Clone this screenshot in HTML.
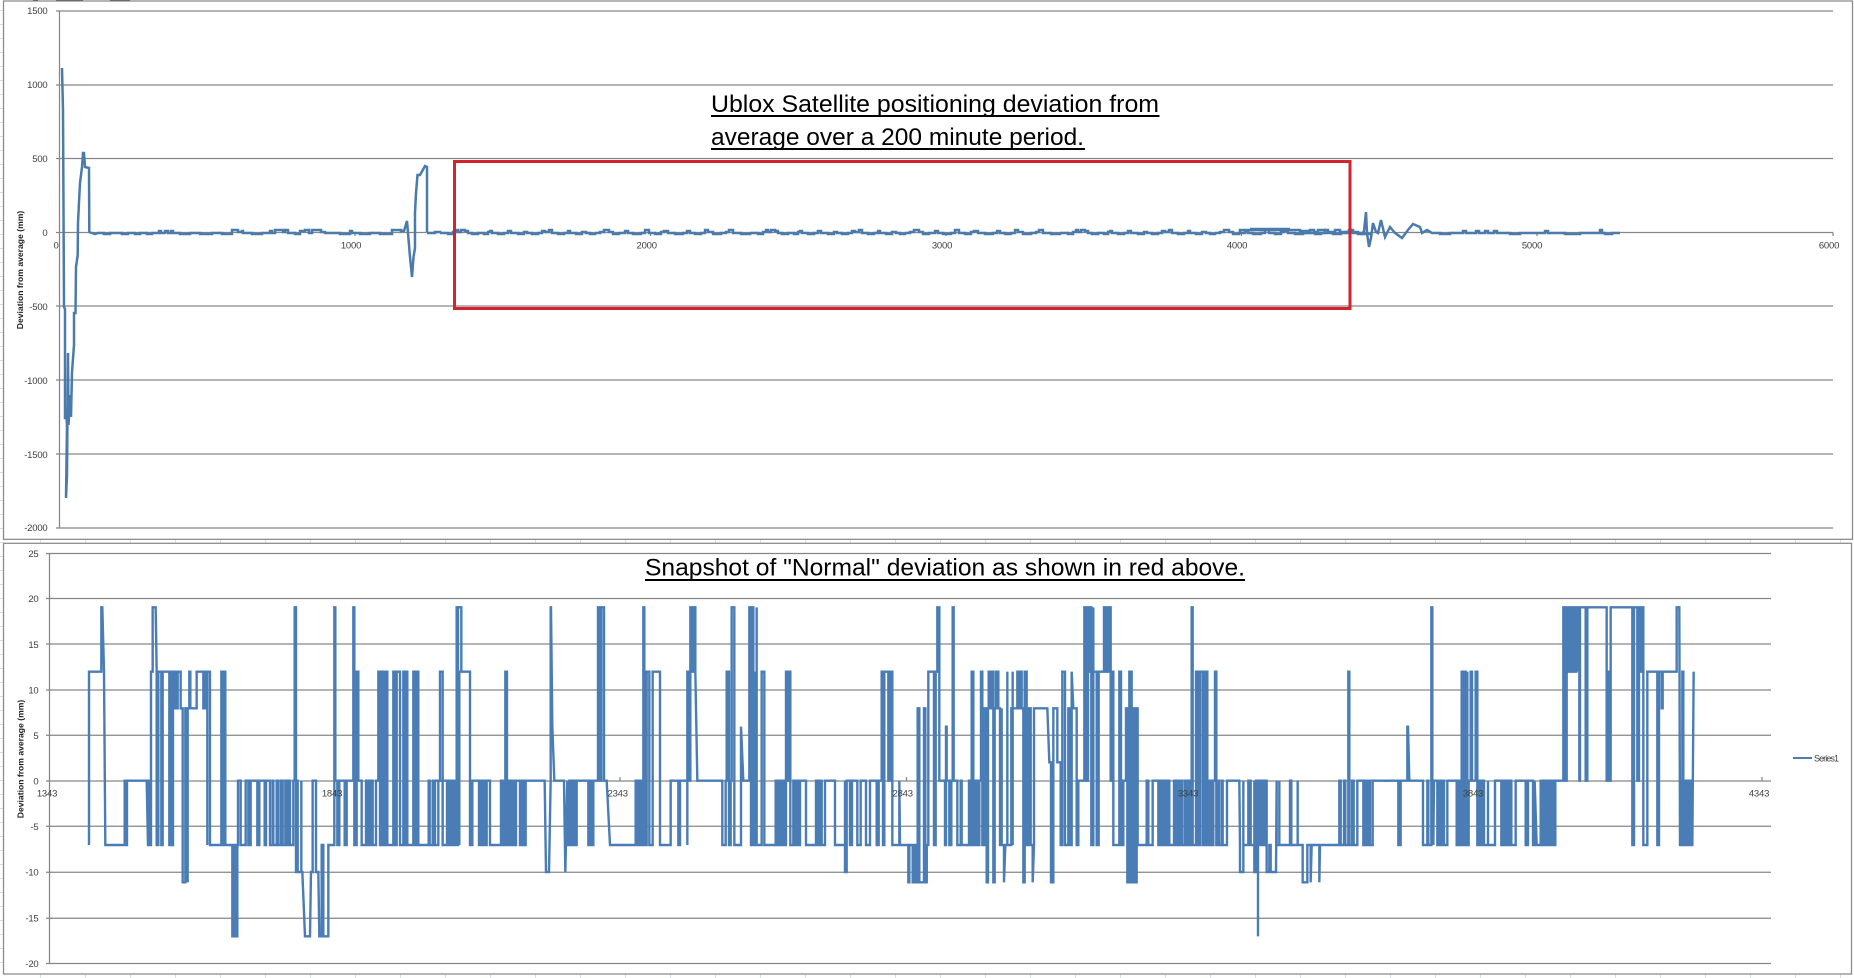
<!DOCTYPE html>
<html><head><meta charset="utf-8"><title>Ublox deviation charts</title>
<style>
html,body{margin:0;padding:0;background:#fff;width:1854px;height:978px;overflow:hidden}
svg{display:block;position:absolute;left:0;top:0}
.t{font:9.5px "Liberation Sans",sans-serif;fill:#404040;letter-spacing:-.2px}
.e{text-anchor:end}.m{text-anchor:middle}
.y{font:bold 8.6px "Liberation Sans",sans-serif;fill:#222;text-anchor:middle}
.h{font:24px "Liberation Sans",sans-serif;fill:#000}
.g{stroke:#868686;stroke-width:1.25;fill:none}
.s{fill:none;stroke:#4a7db5;stroke-linejoin:miter}
.n{fill:none;stroke:#4a7bab;stroke-width:2.5}
</style></head><body>
<svg width="1854" height="978" viewBox="0 0 1854 978" xmlns="http://www.w3.org/2000/svg">
<defs>
<path id="na" d="M0,233H8V234H13V232H16V230H18V232H21V230H25V231H28V233H32V234H38V233H44V234H48V232H50V231H52V233H58V234H64V233H68V231H71V233H78V234H84V232H87V233H92V234H98V233H102V231H105V232H109V230H112V233H118V234H124V233H128V231H130V233H136V234H142V232H146V233H150V234H155V233"/>
<path id="nb" d="M0,233H5V232H9V230H14V232H18V234H24V233H30V231H33V233H38V234H46V233H50V230H54V233H60V234H66V232H69V231H73V233H80V234H88V233H92V231H95V233H100V234H106V233H110V230H113V232H118V234H126V233H131V232H134V230H138V233H146V234H155V233"/>
</defs>
<rect width="1854" height="978" fill="#fff"/>
<!-- sheet cell lines -->
<g stroke="#d8deea" stroke-width="1" fill="none">
<path d="M0 10.5H3M0 24.5H3M0 38.5H3M0 52.5H3M0 66.5H3M0 80.5H3M0 94.5H3M0 108.5H3M0 122.5H3M0 136.5H3M0 150.5H3M0 164.5H3M0 178.5H3M0 192.5H3M0 206.5H3M0 220.5H3M0 234.5H3M0 248.5H3M0 262.5H3M0 276.5H3M0 290.5H3M0 304.5H3M0 318.5H3M0 332.5H3M0 346.5H3M0 360.5H3M0 374.5H3M0 388.5H3M0 402.5H3M0 416.5H3M0 430.5H3M0 444.5H3M0 458.5H3M0 472.5H3M0 486.5H3M0 500.5H3M0 514.5H3M0 528.5H3M0 542.5H3M0 556.5H3M0 570.5H3M0 584.5H3M0 598.5H3M0 612.5H3M0 626.5H3M0 640.5H3M0 654.5H3M0 668.5H3M0 682.5H3M0 696.5H3M0 710.5H3M0 724.5H3M0 738.5H3M0 752.5H3M0 766.5H3M0 780.5H3M0 794.5H3M0 808.5H3M0 822.5H3M0 836.5H3M0 850.5H3M0 864.5H3M0 878.5H3M0 892.5H3M0 906.5H3M0 920.5H3M0 934.5H3M0 948.5H3M0 962.5H3"/>
<path d="M40.5 539V543M85.5 539V543M130.5 539V543M175.5 539V543M220.5 539V543M265.5 539V543M310.5 539V543M355.5 539V543M400.5 539V543M445.5 539V543M490.5 539V543M535.5 539V543M580.5 539V543M625.5 539V543M670.5 539V543M715.5 539V543M760.5 539V543M805.5 539V543M850.5 539V543M895.5 539V543M940.5 539V543M985.5 539V543M1030.5 539V543M1075.5 539V543M1120.5 539V543M1165.5 539V543M1210.5 539V543M1255.5 539V543M1300.5 539V543M1345.5 539V543M1390.5 539V543M1435.5 539V543M1480.5 539V543M1525.5 539V543M1570.5 539V543M1615.5 539V543M1660.5 539V543M1705.5 539V543M1750.5 539V543M1795.5 539V543M1840.5 539V543"/>
<path d="M40.5 974V978M85.5 974V978M130.5 974V978M175.5 974V978M220.5 974V978M265.5 974V978M310.5 974V978M355.5 974V978M400.5 974V978M445.5 974V978M490.5 974V978M535.5 974V978M580.5 974V978M625.5 974V978M670.5 974V978M715.5 974V978M760.5 974V978M805.5 974V978M850.5 974V978M895.5 974V978M940.5 974V978M985.5 974V978M1030.5 974V978M1075.5 974V978M1120.5 974V978M1165.5 974V978M1210.5 974V978M1255.5 974V978M1300.5 974V978M1345.5 974V978M1390.5 974V978M1435.5 974V978M1480.5 974V978M1525.5 974V978M1570.5 974V978M1615.5 974V978M1660.5 974V978M1705.5 974V978M1750.5 974V978M1795.5 974V978M1840.5 974V978"/>
</g>
<rect x="33" y="0" width="5" height="1" fill="#333"/><rect x="56" y="0" width="27" height="1" fill="#333"/><rect x="110" y="0" width="20" height="1" fill="#333"/>

<!-- frames -->
<rect x="3.5" y="1" width="1849" height="538.3" fill="#fff" stroke="#8a8a8a" stroke-width="1.25"/>
<rect x="3.5" y="543.3" width="1848" height="430.7" fill="#fff" stroke="#8a8a8a" stroke-width="1.25"/>

<!-- top chart grid -->
<path class="g" d="M56 11H1833M56 85H1833M56 158.5H1833M56 232.5H1833M56 306H1833M56 380H1833M56 454H1833M56 528H1833M59.5 11V528"/>
<path class="g" d="M355 232.5V236M650.5 232.5V236M946 232.5V236M1241.5 232.5V236M1537 232.5V236M1833 232.5V236" stroke-width="1"/>
<text class="t e" x="47.5" y="14">1500</text><text class="t e" x="47.5" y="88">1000</text><text class="t e" x="47.5" y="162">500</text><text class="t e" x="47.5" y="236">0</text><text class="t e" x="47.5" y="310">-500</text><text class="t e" x="47.5" y="384">-1000</text><text class="t e" x="47.5" y="458">-1500</text><text class="t e" x="47.5" y="531">-2000</text>
<text class="t m" x="56" y="248.5">0</text><text class="t m" x="351" y="248.5">1000</text><text class="t m" x="646.7" y="248.5">2000</text><text class="t m" x="942" y="248.5">3000</text><text class="t m" x="1237" y="248.5">4000</text><text class="t m" x="1532" y="248.5">5000</text><text class="t m" x="1829" y="248.5">6000</text>
<text class="y" transform="translate(23,270) rotate(-90)">Deviation from average  (mm)</text>

<!-- top series -->
<path class="n" d="M62,68L63,110L64,307L65,309L65,418L66.5,418L67,425L66,498L67,475L68,353L68.5,425L70,395L71,417L72,372L74,345L74,313L75.5,313L76,267L77.7,255L78,223L79,202L80,183L82,167L83,153L84,153L85,167L89,168L89.3,232L92,233L95,234L98,233H104V234H110V233H122V234H128V233H135V234H140V233H147V234H152V233H159V231H161V233H165V234V231H168V233H171V231H173V233H180V234H190V233H200V234H212V233H222V234H232V233V230H238V232H242V231H243V233H252V234H262V233H270V231H272V233H275V230H283V232H285V230H288V233H295V234H300V233V231H305V230H309V233H312V230H321V232H325V233H340V234H350V233V231H352V233H360V234H370V233H380V234H392V230H401V231H404L407,221L408,233L410,257L412,277L413.5,257L415,248L415,213L416,193L417.5,175L420,175L425,166L427,167L427,232"/>
<path class="n" d="M427,233H435V232H440V233"/>
<use href="#na" x="440" class="n"/><use href="#nb" x="595" class="n"/><use href="#na" x="750" class="n"/><use href="#nb" x="905" class="n"/><use href="#na" x="1060" class="n"/><use href="#nb" x="1215" class="n"/>
<path class="n" d="M1240,233V230H1300V233M1250,229H1290M1300,233V231H1305V233H1310V230H1314V232H1318V230H1325V233H1335V230H1340V232H1346V233H1350"/>
<path class="n" d="M1350,232H1358V234H1362L1364,231L1366,212L1367,233L1369,247L1371,238L1373,223L1376,232L1378,233L1381,220L1385,237L1390,227L1395,233L1402,238L1408,230L1413,224L1420,227L1422,233L1427,230L1432,233H1440V234H1450V233H1463V231H1466V233H1476V231H1479V233H1485V231H1488V233H1494V231H1497V233H1510V234H1520V233H1545V231H1548V233H1565V234H1580V233H1600V230H1602V233H1605V234H1612V233H1620"/>

<!-- red box -->
<rect x="454.5" y="161.5" width="895.5" height="147" fill="none" stroke="#d2232e" stroke-width="3"/>
<!-- top titles -->
<text class="h" x="711" y="112" textLength="448" lengthAdjust="spacingAndGlyphs">Ublox Satellite positioning deviation from</text>
<rect x="711" y="115" width="448.5" height="2"/>
<text class="h" x="711" y="145" textLength="373" lengthAdjust="spacingAndGlyphs">average over a 200 minute period.</text>
<rect x="711" y="148" width="374" height="2"/>

<!-- bottom chart grid -->
<path class="g" d="M46 553.5H1771M46 598.5H1771M46 644H1771M46 690H1771M46 735.3H1771M46 781H1771M46 826.3H1771M46 872.3H1771M46 918.3H1771M46 963.5H1771M49.5 553.5V963.5"/>
<path class="g" stroke-width="1" d="M334.5 781V777M620 781V777M906.5 781V777M1192 781V777M1477 781V777M1762 781V777"/>
<text class="t e" x="38.5" y="557">25</text><text class="t e" x="38.5" y="602">20</text><text class="t e" x="38.5" y="648">15</text><text class="t e" x="38.5" y="693.5">10</text><text class="t e" x="38.5" y="739">5</text><text class="t e" x="38.5" y="784.5">0</text><text class="t e" x="38.5" y="830">-5</text><text class="t e" x="38.5" y="875.5">-10</text><text class="t e" x="38.5" y="921.5">-15</text><text class="t e" x="38.5" y="967">-20</text>
<text class="y" transform="translate(23.5,759) rotate(-90)">Deviation from average  (mm)</text>

<!-- bottom series (coordinates in 3x space) -->
<g transform="translate(0,530) scale(.33333)" class="s" stroke-width="7.2">
<path d="M267 945V425H304V232H307L312 425L316 945H374V752H377V945H381V752H440L444 945H447V752H450V945H453V425H458V232H467L470 425V945H475V425H484V945H488V425H508V945H512V425H515V945H519V425H522V535H526V425H530V535H533V425H542V535H548V1057H556V535H558V945H561V535H563V1057V535H568V425H571V535H590V425H610V535H614V425H620V535H622V945V425H630V945H664V425H668V945H672V425H676V945H680V945H697V1219H701V945H705V1219H712V945H714V752H722V945H737V752H745V945H752V752H772V945H778V752H794V945H798V752H810V945H818V752H820V945H830V752H835V945H843V752H848V945H856V752H860V945H865V752H870V945H880V752H884V232H888V1026H890V752H893V1026H904V752V1026H907L915 1219H930L933 1026H938V752H948V1026H955L958 1219H965V945H970V1219H985V945H1003V232H1006V752H1012V945H1018V752H1034V945H1040V752H1060V232H1063V945H1070V425H1075V752H1085V945H1098V752H1102V945H1107V752H1112V945H1115V752H1118V945H1128V752H1135V425H1140V945H1145V425H1152V945H1158V425H1162V945H1180V425H1186V945H1190V425H1200V945H1210V425H1214V945H1218V425H1222V945H1240V425H1245V945H1250V425H1255V945H1286V752H1289V945H1300V752H1305V945H1315V752H1320V425H1328V752V945H1341V752H1345V945H1352V752H1358V945H1362V752H1370V232H1373V425H1378V945"/>
</g>
<g transform="translate(460,530) scale(.33333)" class="s" stroke-width="7.2">
<path d="M-82 945V752H-76V945V752H-12V945H-6V232H4V425H30V945H37V752H57V945H62V752H66V945H72V752H76V945H80V752H90V945H123V752H128V945H131V752V945H136V425H141V945H147V752H152V945H158V752H162V945H168V752H180V945H185V752H190V945H197V752H254L258 1026H267L272 752V232H273L277 590L283 752H312L316 1026L322 752V945H328V752H332V945H338V752H345V945H350V752H385V945H390V752H396V945H400V752H414V232H418V752H424V232H432V752H440L450 945H527V752H532V945H538V752H545V945H550V232H553V945H560V425H568V945H578V425H600V945H632V752H655V945H660V752H682V945V752V425H688V752H691V232H695V425H699V232H706V425L712 752H787V945H797V752H800V425H807V945H812V752H815V232H823V945H843V590L850 752H868V232H873V945H877V232H880V945H886V425V945H890V232V945H905V425H913V945H947V752H952V945H958V752H963V945H968V752H972V945H978V425H982V752H986V425H991V752V945H1000V752H1005V945H1010V752H1015V945H1020V752H1038V945H1068V752H1075V945H1080V752H1085V945H1095V752H1125V945H1155V752V1026H1160V752H1170V945H1176V752H1192V945H1202V752H1218V945H1230V752H1250V945H1256V752H1265V425H1269V945H1273V425H1280V425H1285V752H1292V425H1297V945H1318V752L1320 945H1345V1057H1348V945H1358V1057H1362V945H1368V1057H1373V535H1378V1057H1385H1392V535H1396V1057H1400V945"/>
</g>
<g transform="translate(920,530) scale(.33333)" class="s" stroke-width="7.2">
<path d="M20 1057V945H25V425H42V945H47V425H52V232H58V752H75V945H78V590H80V752H88V945H94V752H98V232H101V752H112V945H122V752H125V945H147V752H150V945H155V425H160V945H165V752H172V945H178V752H183V425H187V945H193V535H200V1057H204V535H206V425H212V535H215V425H220V1057H224V535H228V425H235V535H240V945H245V535V945H252V1057L256 945H262V425V945H274V535H278V425V945V535H292V425H297V535H303V425H305V535H310V1057H314V425H320V945H325V535H332V945H338V1057L342 945V535H382L388 697H393V1057H400V535H412V697H422V945H427V425H435V945H445V535H450V945H455V425L460 535H470V945H475V752H493V232H497V752H504V232H508V425H511V232H514V945H520V232V425H530V945H536V425H552V232H556V425H560V232H564V425H568V232H572V425V752H578V425H580V945H598V425H603V945H610V752H618V535H622V1057H628V425H635V1057H640V535H645V1057H650V535H653V945H680V752H685V945H698V752H715V945H722V752H728V945H733V752H738V945H743V752H748V945H753V945H762V752H767V945H772V752H777V945H782V752H787V945H795V752H800V945H805V752H810V945H815V232H818V945H828V425H835V945H840V425H848V945H855V425H862V945H864V752H868V945H872V752H876V945H880V752H885V425H889V945H893V752H897V945H905V752H908V945H921V752H958L960 945V1026H970V752V945H985V752H992V945H1003V752V1026H1008V752H1014V1219V945H1020V752H1024V945H1028V752H1032V945H1036V752H1040V945V1026H1048V945H1052V1026H1068L1070 752V945H1078V752V945H1110V752H1114V945H1133V752V945H1148V1057H1162V945H1172V1057L1175 945H1198V1057L1200 945H1258V752H1262V945H1272V752H1276V945H1285V425H1288V945H1296V752H1301V945H1312V752H1330V945H1336V752H1342V945H1346V752H1350V945H1358V752H1410"/>
</g>
<g transform="translate(1384,530) scale(.33333)" class="s" stroke-width="7.2">
<path d="M0 752H43V945H50V752H70V590H72L76 752H117V945H130V752H133V945H142V232H145V752H150L148 945V752H160V945H165V752H170V945H175V752H180V945H190V752H194H218V945H223V752H228V945H233V425H237V945H241V425H245V945H250V425V945H254V752H260V425H264V752H275V425H280V945H285V752H290V945H295V752H300V945H312V752V945H333V752H352V945H357V752H362V945H368V752H372V945H378V752H382V945H395V752H425V945H432V752H447V945H452V752L458 945H470V752H476V945H482V752H488V945H492V752H498V945H503V752H508V945H514V752H518H538V232H542V752H548V232H555V425H560V232H565V425H569V232H573V425H577V232H582V425L586 232V752H588V232H605V752H610V232H668V752H672V425H676V752H680V232H745V945H750V232H760V752H765V232H770V425H774V232H778V425V945H782H790V425H820V945H825V425H833V535H836V425H878V232H886L888 945H892V752H895V425H898V945H902V752H906V945H910V752H914V945H918V752H922V945H925L929 425"/>
</g>
<path stroke="#4a7db5" stroke-width="2" d="M1793 758H1812"/>
<text x="1814" y="761.5" textLength="25" style="font:9px 'Liberation Sans',sans-serif;fill:#404040">Series1</text>
<text class="t m" x="47" y="796.5">1343</text><text class="t m" x="332" y="796.5">1843</text><text class="t m" x="617.7" y="796.5">2343</text><text class="t m" x="902.7" y="796.5">2843</text><text class="t m" x="1188" y="796.5">3343</text><text class="t m" x="1473" y="796.5">3843</text><text class="t m" x="1759" y="796.5">4343</text>
<!-- bottom title -->
<text class="h" x="645" y="575.5" textLength="600" lengthAdjust="spacingAndGlyphs">Snapshot of "Normal" deviation as shown in red above.</text>
<rect x="645" y="579" width="600" height="2"/>
</svg>
</body></html>
